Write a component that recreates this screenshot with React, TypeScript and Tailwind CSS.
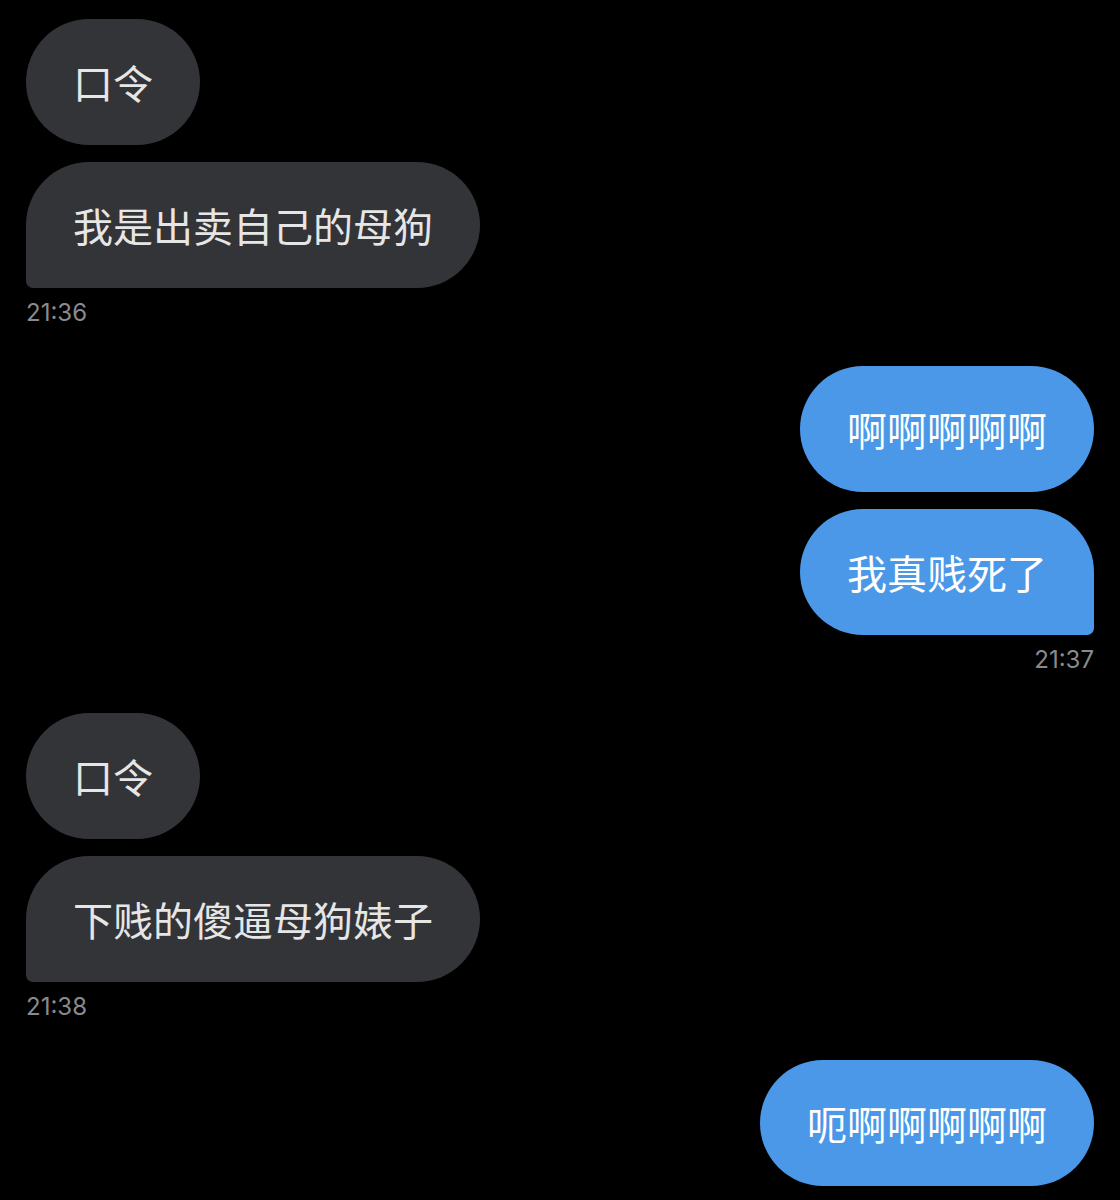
import React from "react";

type Msg = { text: string; tail?: boolean };
type Group = { side: "left" | "right"; msgs: Msg[]; time?: string };

const groups: Group[] = [
  { side: "left", msgs: [{ text: "口令" }, { text: "我是出卖自己的母狗", tail: true }], time: "21:36" },
  { side: "right", msgs: [{ text: "啊啊啊啊啊" }, { text: "我真贱死了", tail: true }], time: "21:37" },
  { side: "left", msgs: [{ text: "口令" }, { text: "下贱的傻逼母狗婊子", tail: true }], time: "21:38" },
  { side: "right", msgs: [{ text: "呃啊啊啊啊啊" }] },
];

const cjk = { fontFamily: '"Noto Sans CJK SC", "Noto Sans", sans-serif' };
const latin = { fontFamily: 'Inter, "Liberation Sans", sans-serif' };

export default function App() {
  return (
    <div className="w-[1120px] h-[1200px] bg-black overflow-hidden px-[26px] pt-[19px] flex flex-col">
      {groups.map((g, gi) => (
        <div
          key={gi}
          className={`flex flex-col gap-[17px] ${gi > 0 ? "mt-[39px]" : ""} ${
            g.side === "left" ? "items-start" : "items-end"
          }`}
        >
          {g.msgs.map((m, mi) => {
            const left = g.side === "left";
            let radius = "rounded-[63px]";
            if (m.tail) radius = left ? "rounded-[63px] rounded-bl-[7px]" : "rounded-[63px] rounded-br-[7px]";
            return (
              <div
                key={mi}
                style={cjk}
                className={`${radius} px-[47px] py-[33px] text-[40px] leading-[60px] whitespace-nowrap ${
                  left ? "bg-[#333438] text-[#e6e6e6]" : "bg-[#4a98e7] text-white"
                }`}
              >
                {m.text}
              </div>
            );
          })}
          {g.time && (
            <div
              style={latin}
              className="-mt-[7px] text-[24px] leading-[29px] text-[#8a8a8e]"
            >
              {g.time}
            </div>
          )}
        </div>
      ))}
    </div>
  );
}
